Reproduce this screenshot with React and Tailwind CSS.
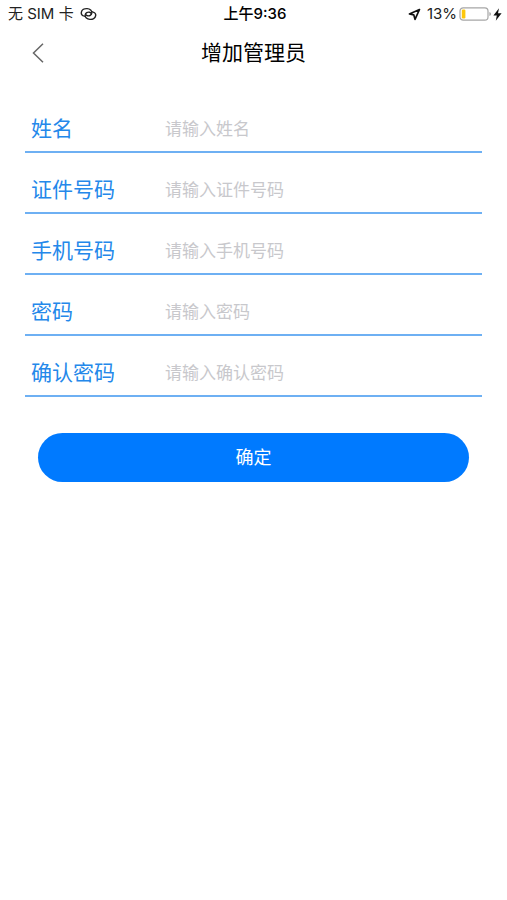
const fields = [
  { id: "name", label: "姓名", type: "text", placeholder: "请输入姓名" },
  { id: "idNumber", label: "证件号码", type: "text", placeholder: "请输入证件号码" },
  { id: "phone", label: "手机号码", type: "tel", placeholder: "请输入手机号码" },
  { id: "password", label: "密码", type: "password", placeholder: "请输入密码" },
  { id: "confirm", label: "确认密码", type: "password", placeholder: "请输入确认密码" },
];

function LinkIcon() {
  return (
    <svg className="h-[14px] w-[17px]" viewBox="0 0 18 14" fill="none" stroke="#222" strokeWidth="1.5" strokeLinecap="round">
      <path d="M4.800 9.300C2.600 8.800 1.100 7.200 1.400 5.200C1.800 2.600 4.600 1.100 7.600 1.300C10.600 1.500 12.800 3.500 12.500 5.900C12.200 8.200 10 9.300 8 8.900C6.900 8.700 6.200 8.100 6 7.200" />
      <path d="M13.200 4.700C15.400 5.200 16.900 6.800 16.600 8.800C16.200 11.400 13.400 12.900 10.400 12.700C7.400 12.500 5.200 10.500 5.500 8.100C5.800 5.800 8 4.700 10 5.100C11.100 5.300 11.800 5.900 12 6.800" />
    </svg>
  );
}

function LocationIcon() {
  return (
    <svg className="h-[13px] w-[13px]" viewBox="0 0 13 13" fill="none" stroke="#111" strokeWidth="1.700" strokeLinejoin="round">
      <path d="M11.500 1.500L1.400 6L5.800 6.900L7 11.400Z" />
    </svg>
  );
}

function BatteryIcon() {
  return (
    <svg className="h-[14px] w-[33px]" viewBox="0 0 33 14">
      <rect x="1" y=".8" width="28" height="12.400" rx="3.200" fill="none" stroke="#a6a6a6" strokeWidth="1.200" />
      <rect x="2.800" y="2.500" width="3.600" height="9" rx="1.200" fill="#fdc70c" />
      <path d="M30.400 5V9Q32 8.500 32 7T30.400 5Z" fill="#a6a6a6" />
    </svg>
  );
}

function BoltIcon() {
  return (
    <svg className="h-[13px] w-[9px]" viewBox="0 0 9 13" fill="#111">
      <path d="M6 .3L.4 7.400H3.800L2.800 12.700L8.600 5.300H5Z" />
    </svg>
  );
}

export default function App() {
  return (
    <div className="min-h-screen bg-white font-['Inter','Noto_Sans_CJK_SC',sans-serif] text-black">
      <div className="grid h-7 grid-cols-[1fr_auto_1fr] items-center pr-[5px] pl-2 text-[15px] leading-5">
        <div className="flex items-center gap-[6px] text-[#222]">
          <span>无 SIM 卡</span>
          <LinkIcon />
        </div>
        <span className="font-medium">上午9:36</span>
        <div className="flex items-center justify-end">
          <LocationIcon />
          <span className="ml-[6px] text-[#222]">13%</span>
          <span className="ml-[2px] flex items-center gap-px">
            <BatteryIcon />
            <BoltIcon />
          </span>
        </div>
      </div>

      <header className="grid h-[50px] grid-cols-[1fr_auto_1fr] items-center">
        <button type="button" aria-label="返回" className="ml-7 flex h-10 w-5 items-center justify-center">
          <svg className="h-5 w-3" viewBox="0 0 12 20" fill="none" stroke="#666" strokeWidth="1.500">
            <path d="M11 .8L1.500 10L11 19.200" />
          </svg>
        </button>
        <h1 className="text-[21px] leading-7 font-normal">增加管理员</h1>
      </header>

      <form className="px-[25px] pt-[14px]" onSubmit={(e) => e.preventDefault()}>
        {fields.map((f) => (
          <div key={f.id} className="flex h-[61px] items-center border-b-2 border-[#6eb0f3] pt-[14px] pl-[6px]">
            <label htmlFor={f.id} className="w-[134px] shrink-0 text-[21px] leading-7 text-[#2488ea]">
              {f.label}
            </label>
            <input
              id={f.id}
              type={f.type}
              placeholder={f.placeholder}
              className="h-8 min-w-0 flex-1 text-[17px] outline-none placeholder:text-[#c8c8cc]"
            />
          </div>
        ))}
        <div className="px-[13px] pt-9">
          <button type="submit" className="h-[49px] w-full rounded-full bg-[#007aff] text-[18px] text-white">
            确定
          </button>
        </div>
      </form>
    </div>
  );
}
